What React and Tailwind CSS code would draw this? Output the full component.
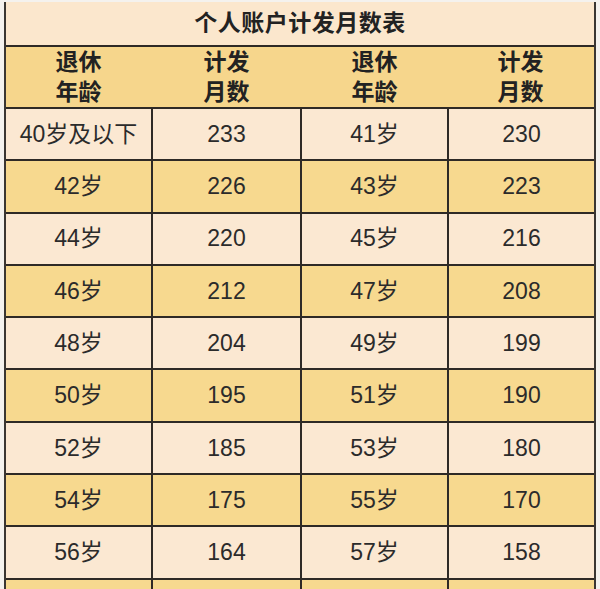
import React from "react";

const rows = [
  ["40岁及以下", "233", "41岁", "230"],
  ["42岁", "226", "43岁", "223"],
  ["44岁", "220", "45岁", "216"],
  ["46岁", "212", "47岁", "208"],
  ["48岁", "204", "49岁", "199"],
  ["50岁", "195", "51岁", "190"],
  ["52岁", "185", "53岁", "180"],
  ["54岁", "175", "55岁", "170"],
  ["56岁", "164", "57岁", "158"],
  ["", "", "", ""],
];

const font = { fontFamily: '"Liberation Sans", "Noto Sans CJK SC", sans-serif' };

export default function App() {
  return (
    <div className="w-[600px] h-[589px] overflow-hidden bg-[#f4f2ee] pt-[2px]" style={font}>
      <div className="ml-[4px] w-[592px] border-x-2 border-[#3a3632]">
        <div className="h-[43px] bg-[#fbe7cd] flex items-center justify-center text-[23px] font-bold text-[#222] tracking-[0.5px]">
          个人账户计发月数表
        </div>
        <div className="h-[2px] bg-[#2e2a26]" />
        <div className="h-[60px] bg-[#f6d68c] grid grid-cols-[147px_149px_147px_145px] text-[23px] font-bold text-[#222] leading-[30px]">
          {["退休|年龄", "计发|月数", "退休|年龄", "计发|月数"].map((t, i) => (
            <div key={i} className="flex flex-col items-center justify-center pr-[2px]">
              <span>{t.split("|")[0]}</span>
              <span>{t.split("|")[1]}</span>
            </div>
          ))}
        </div>
        <div className="h-[2px] bg-[#2e2a26]" />
        {rows.map((r, i) => (
          <div
            key={i}
            className={`grid grid-cols-[147px_149px_147px_145px] h-[52.3px] border-b-2 border-[#2e2a26] text-[23px] text-[#2b2b2b] ${
              i % 2 === 0 ? "bg-[#fbe8d2]" : "bg-[#f7d98f]"
            }`}
          >
            {r.map((c, j) => (
              <div
                key={j}
                className={`flex items-center justify-center ${j < 3 ? "border-r-2 border-[#2e2a26]" : ""}`}
              >
                {c}
              </div>
            ))}
          </div>
        ))}
      </div>
    </div>
  );
}
